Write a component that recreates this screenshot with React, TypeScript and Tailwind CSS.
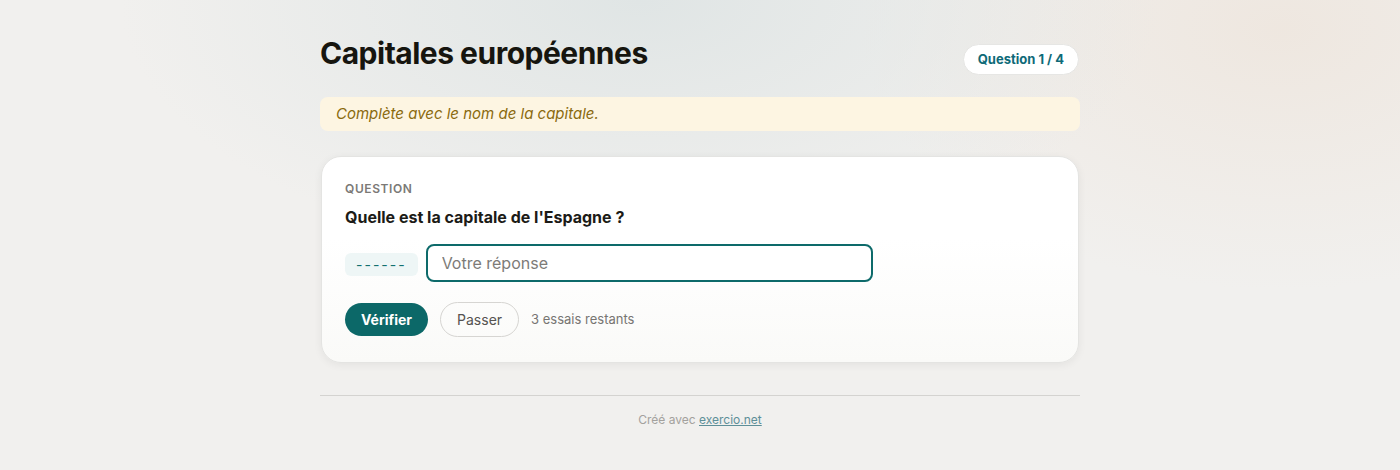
import { useState } from "react"

export default function App() {
  const [answer, setAnswer] = useState("")

  return (
    <div
      className="min-h-[470px] w-full bg-[#f1f0ee] font-['Inter',sans-serif]"
      style={{
        backgroundImage:
          "radial-gradient(ellipse 520px 260px at 640px 0px, rgba(222,228,228,0.9), rgba(222,228,228,0) 100%), radial-gradient(ellipse 420px 260px at 1280px 30px, rgba(238,230,222,0.9), rgba(238,230,222,0) 100%)",
      }}
    >
      <div className="mx-auto w-[760px] pt-[31px]">
        <header className="flex items-center justify-between">
          <h1 className="text-[30px] font-bold tracking-[-0.5px] text-[#16150f]">Capitales européennes</h1>
          <span className="mr-px mt-[12px] rounded-full border border-[#e6e6e4] bg-white px-[14px] py-[5px] text-[13px] font-bold text-[#0e6a78]">
            Question 1 / 4
          </span>
        </header>

        <div className="mt-[21px] rounded-lg bg-[#fdf5e2] py-[7px] pl-4 text-[15px] leading-5 italic text-[#8a6a0e]">
          Complète avec le nom de la capitale.
        </div>

        <section className="mx-px mt-[25px] rounded-[20px] border border-[#e4e4e2] bg-gradient-to-b from-white from-40% to-[#fafaf8] px-[23px] pb-[25px] pt-[23px] shadow-[0_2px_8px_rgba(0,0,0,0.06)]">
          <p className="text-[12px] font-semibold uppercase tracking-[0.6px] text-[#7b7976]">Question</p>
          <p className="mt-[7px] text-[16px] font-bold text-[#1c1b17]">Quelle est la capitale de l'Espagne ?</p>

          <div className="mt-[15px] flex items-center gap-2">
            <span className="mt-[2px] rounded-md bg-[#eef6f6] px-[11px] py-[1px] text-[14px] tracking-[2px] text-[#13706f]">------</span>
            <input
              value={answer}
              onChange={(e) => setAnswer(e.target.value)}
              placeholder="Votre réponse"
              className="h-[38px] w-[447px] rounded-lg border-2 border-[#0d6a6a] bg-white px-[14px] text-[16px] text-[#222] outline-none placeholder:text-[#7d7b78]"
            />
          </div>

          <div className="mt-[20px] flex items-center">
            <button className="h-[33px] rounded-full bg-[#0c6868] px-4 text-[14px] font-bold text-white">Vérifier</button>
            <button className="ml-3 h-[35px] rounded-full border border-[#d6d5d2] bg-transparent px-4 text-[14px] text-[#555350]">
              Passer
            </button>
            <span className="ml-3 text-[13px] text-[#777572]">3 essais restants</span>
          </div>
        </section>

        <footer className="mt-[32px] border-t border-[#d4d3d0] pt-[15px] text-center text-[12px] text-[#a3a19d]">
          Créé avec{" "}
          <a href="#" className="text-[#5e8f98] underline">
            exercio.net
          </a>
        </footer>
      </div>
    </div>
  )
}
